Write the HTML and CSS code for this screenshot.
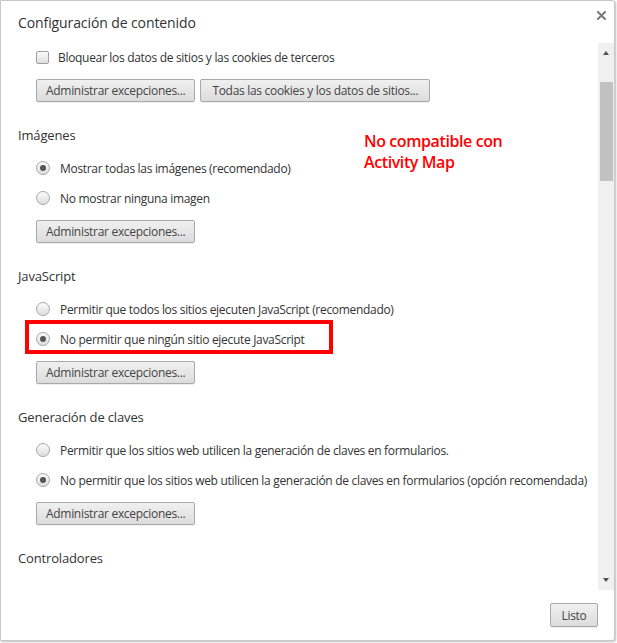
FILE: index.html
```html
<!DOCTYPE html>
<html lang="es">
<head>
<meta charset="utf-8">
<title>Configuración de contenido</title>
<link rel="stylesheet" href="styles.css">
</head>
<body>
<div class="dialog">
  <div class="dlg-header">
    <h1 class="dlg-title">Configuración de contenido</h1>
    <button class="close-btn" aria-label="Cerrar">
      <svg width="9" height="9" viewBox="0 0 9 9"><path d="M1 1 L8 8 M8 1 L1 8" stroke="#7a7a7a" stroke-width="2" stroke-linecap="square"/></svg>
    </button>
  </div>
  <div class="dlg-body">
    <div class="content">
      <section class="section first">
        <label class="row check-row"><span class="checkbox"></span><span class="label">Bloquear los datos de sitios y las cookies de terceros</span></label>
        <div class="btn-row">
          <button class="btn">Administrar excepciones...</button>
          <button class="btn wide">Todas las cookies y los datos de sitios...</button>
        </div>
      </section>
      <section class="section">
        <h3 class="sec-title">Imágenes</h3>
        <label class="row"><span class="radio checked"></span><span class="label">Mostrar todas las imágenes (recomendado)</span></label>
        <label class="row"><span class="radio"></span><span class="label">No mostrar ninguna imagen</span></label>
        <div class="btn-row"><button class="btn">Administrar excepciones...</button></div>
      </section>
      <section class="section">
        <h3 class="sec-title">JavaScript</h3>
        <label class="row"><span class="radio"></span><span class="label">Permitir que todos los sitios ejecuten JavaScript (recomendado)</span></label>
        <label class="row highlighted"><span class="radio checked"></span><span class="label">No permitir que ningún sitio ejecute JavaScript</span><span class="red-box"></span></label>
        <div class="btn-row"><button class="btn">Administrar excepciones...</button></div>
      </section>
      <section class="section">
        <h3 class="sec-title">Generación de claves</h3>
        <label class="row"><span class="radio"></span><span class="label">Permitir que los sitios web utilicen la generación de claves en formularios.</span></label>
        <label class="row"><span class="radio checked"></span><span class="label">No permitir que los sitios web utilicen la generación de claves en formularios (opción recomendada)</span></label>
        <div class="btn-row"><button class="btn">Administrar excepciones...</button></div>
      </section>
      <section class="section">
        <h3 class="sec-title">Controladores</h3>
      </section>
    </div>
    <div class="scrollbar">
      <span class="arrow up"></span>
      <div class="track"><div class="thumb"></div></div>
      <span class="arrow down"></span>
    </div>
  </div>
  <div class="dlg-footer">
    <button class="btn done">Listo</button>
  </div>
  <div class="annotation">No compatible con<br>Activity Map</div>
</div>
</body>
</html>
```
FILE: styles.css
```css
* { box-sizing: border-box; }
html, body { margin: 0; padding: 0; background: #ffffff; }
body {
  font-family: "Open Sans", "Noto Sans", sans-serif;
  color: #333333;
  width: 617px;
  height: 643px;
  overflow: hidden;
}
.dialog {
  position: relative;
  width: 615px;
  height: 641px;
  background: #ffffff;
  border: 1px solid #c9c9c9;
  border-radius: 0 3px 3px 0;
  box-shadow: 1px 1px 2px rgba(0,0,0,0.25);
  display: flex;
  flex-direction: column;
}
.dlg-header {
  height: 42px;
  display: flex;
  align-items: flex-start;
  justify-content: space-between;
  padding: 12px 8px 0 17px;
}
.dlg-title {
  margin: 0;
  font-size: 14px;
  font-weight: 400;
  line-height: 20px;
  color: #333;
  letter-spacing: -0.1px;
}
.close-btn {
  border: 0;
  background: none;
  padding: 0;
  margin-top: -2px;
  width: 9px;
  height: 9px;
  display: flex;
}
.dlg-body {
  height: 547px;
  display: flex;
}
.content {
  flex: 1;
  overflow: hidden;
  padding-left: 17px;
}
.section {
  padding-bottom: 23px;
}
.section.first { padding-top: 0; }
.sec-title {
  margin: 0 0 8px 0;
  font-size: 13px;
  font-weight: 400;
  line-height: 20px;
  height: 20px;
  color: #333;
  letter-spacing: -0.15px;
}
.row {
  position: relative;
  display: flex;
  align-items: center;
  height: 30px;
  padding-left: 18px;
  font-size: 12px;
  color: #333;
}
.check-row { height: 28px; }
.label { white-space: nowrap; letter-spacing: -0.31px; }
.radio {
  width: 14px;
  height: 14px;
  border-radius: 50%;
  border: 1px solid #a8a8a8;
  background: linear-gradient(#fbfbfb, #dedede);
  margin-right: 10px;
  flex: none;
  display: flex;
  align-items: center;
  justify-content: center;
}
.radio.checked::after {
  content: "";
  width: 6px;
  height: 6px;
  border-radius: 50%;
  background: #555;
}
.checkbox {
  width: 13px;
  height: 13px;
  border: 1px solid #a0a0a0;
  border-radius: 2px;
  background: linear-gradient(#fbfbfb, #dedede);
  margin-right: 9px;
  flex: none;
}
.btn-row {
  display: flex;
  gap: 5px;
  padding-left: 18px;
  margin-top: 7px;
}
.section.first .btn-row { margin-top: 8px; }
.btn {
  font-family: "Open Sans", "Noto Sans", sans-serif;
  font-size: 12px;
  letter-spacing: -0.3px;
  color: #444;
  height: 23px;
  padding: 0 9px;
  border: 1px solid #a9a9a9;
  border-radius: 2px;
  background: linear-gradient(#f0f0f0, #dcdcdc);
  box-shadow: 0 1px 0 rgba(0,0,0,0.06);
  line-height: 21px;
}
.btn.wide { padding: 0 11px; }
.red-box {
  position: absolute;
  left: 7px;
  top: -4px;
  width: 308px;
  height: 34px;
  border: 4px solid #ff0000;
}
.scrollbar {
  width: 16px;
  background: #f0f0f0;
  display: flex;
  flex-direction: column;
  align-items: center;
}
.arrow {
  width: 0;
  height: 0;
  border-left: 3.5px solid transparent;
  border-right: 3.5px solid transparent;
  flex: none;
}
.arrow.up { border-bottom: 4px solid #505050; margin-top: 8px; }
.arrow.down { border-top: 4px solid #505050; margin-bottom: 8px; }
.track {
  flex: 1;
  width: 100%;
  padding: 27px 1px 0 2px;
}
.thumb {
  height: 99px;
  background: #c1c1c1;
}
.dlg-footer {
  flex: 1;
  display: flex;
  justify-content: flex-end;
  align-items: flex-start;
  padding: 13px 16px 0 0;
}
.btn.done { width: 48px; padding: 0; height: 24px; }
.annotation {
  position: absolute;
  left: 363px;
  top: 130px;
  color: #ff0000;
  font-family: "Open Sans", sans-serif;
  font-weight: 600;
  font-size: 16px;
  line-height: 21px;
  letter-spacing: -0.4px;
}
```
